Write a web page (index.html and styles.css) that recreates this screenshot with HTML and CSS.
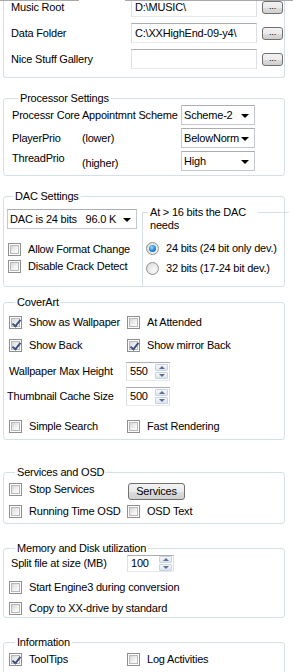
FILE: index.html
```html
<!DOCTYPE html>
<html lang="en">
<head>
  <meta charset="UTF-8" />
  <title>Settings</title>
  <link rel="stylesheet" href="styles.css">
</head>
<body>
  <div class="topline"><span class="seg seg-a"></span><span class="seg seg-b"></span></div>

  <div class="box folders">
    <div class="frow first">
      <span class="flabel">Music Root</span>
      <span class="input">D:\MUSIC\</span>
      <span class="btn dots">...</span>
    </div>
    <div class="frow">
      <span class="flabel">Data Folder</span>
      <span class="input">C:\XXHighEnd-09-y4\</span>
      <span class="btn dots">...</span>
    </div>
    <div class="frow">
      <span class="flabel">Nice Stuff Gallery</span>
      <span class="input"></span>
      <span class="btn dots">...</span>
    </div>
  </div>

  <div class="box group proc">
    <div class="legend">Processor Settings</div>
    <div class="prow">
      <span class="plabel">Processr Core Appointmnt Scheme</span>
      <span class="select">Scheme-2<i class="arrow"></i></span>
    </div>
    <div class="prow">
      <span class="pname">PlayerPrio</span>
      <span class="pnote">(lower)</span>
      <span class="select">BelowNorm<i class="arrow"></i></span>
    </div>
    <div class="prow top">
      <span class="pname up">ThreadPrio</span>
      <span class="pnote down">(higher)</span>
      <span class="select">High<i class="arrow"></i></span>
    </div>
  </div>

  <div class="box group dac">
    <div class="legend">DAC Settings</div>
    <div class="dac-body">
      <div class="dac-left">
        <span class="select wide">DAC is 24 bits&nbsp;&nbsp;&nbsp;96.0 K<i class="arrow"></i></span>
        <label class="check first-check"><span class="cb"></span>Allow Format Change</label>
        <label class="check"><span class="cb"></span>Disable Crack Detect</label>
      </div>
      <div class="subbox">
        <div class="sublegend">At &gt; 16 bits the DAC needs</div>
        <label class="radio"><span class="rb on"></span>24 bits (24 bit only dev.)</label>
        <label class="radio"><span class="rb"></span>32 bits (17-24 bit dev.)</label>
      </div>
    </div>
  </div>

  <div class="box group cover">
    <div class="legend">CoverArt</div>
    <div class="crow r1">
      <label class="check col"><span class="cb on"></span>Show as Wallpaper</label>
      <label class="check"><span class="cb"></span>At Attended</label>
    </div>
    <div class="crow r2">
      <label class="check col"><span class="cb on"></span>Show Back</label>
      <label class="check"><span class="cb on"></span>Show mirror Back</label>
    </div>
    <div class="srow r3">
      <span class="slabel">Wallpaper Max Height</span>
      <span class="spin">550<span class="spin-btns"><i class="sb"><b class="tri-up"></b></i><i class="sb"><b class="tri-down"></b></i></span></span>
    </div>
    <div class="srow r4">
      <span class="slabel tight">Thumbnail Cache Size</span>
      <span class="spin">500<span class="spin-btns"><i class="sb"><b class="tri-up"></b></i><i class="sb"><b class="tri-down"></b></i></span></span>
    </div>
    <div class="crow r5">
      <label class="check col"><span class="cb"></span>Simple Search</label>
      <label class="check"><span class="cb"></span>Fast Rendering</label>
    </div>
  </div>

  <div class="box group services">
    <div class="legend">Services and OSD</div>
    <div class="crow s1">
      <label class="check col"><span class="cb"></span>Stop Services</label>
      <span class="btn svc">Services</span>
    </div>
    <div class="crow s2">
      <label class="check col"><span class="cb"></span>Running Time OSD</label>
      <label class="check"><span class="cb"></span>OSD Text</label>
    </div>
  </div>

  <div class="box group memory">
    <div class="legend">Memory and Disk utilization</div>
    <div class="srow m1">
      <span class="slabel">Split file at size (MB)</span>
      <span class="spin small">100<span class="spin-btns"><i class="sb"><b class="tri-up"></b></i><i class="sb"><b class="tri-down"></b></i></span></span>
    </div>
    <div class="crow m2">
      <label class="check"><span class="cb"></span>Start Engine3 during conversion</label>
    </div>
    <div class="crow m3">
      <label class="check"><span class="cb"></span>Copy to XX-drive by standard</label>
    </div>
  </div>

  <div class="box group info">
    <div class="legend">Information</div>
    <div class="crow i1">
      <label class="check col"><span class="cb on"></span>ToolTips</label>
      <label class="check"><span class="cb"></span>Log Activities</label>
    </div>
  </div>
</body>
</html>
```

FILE: styles.css
```css
body {
  margin: 0;
  background: #fff;
  color: #000;
  font-family: 'Liberation Sans', Arial, sans-serif;
  font-size: 11px;
  line-height: 13px;
  letter-spacing: -0.2px;
  overflow: hidden;
}
.topline {
  position: relative;
  z-index: 1;
  display: flex;
  height: 1px;
}
.seg {
  height: 1px;
  background: #a8a8a8;
}
.seg-a {
  width: 79px;
}
.seg-b {
  width: 168px;
  margin-left: 46px;
}
.box {
  box-sizing: border-box;
  width: 282px;
  margin-left: 3px;
  border: 1px solid #d5dfe5;
  border-radius: 3px;
}
.folders {
  margin-top: -6px;
  border-top: none;
  border-radius: 0 0 3px 3px;
  padding: 0 0 8px 7px;
}
.frow {
  display: flex;
  align-items: center;
  height: 20px;
  margin-top: 6px;
}
.frow.first {
  margin-top: 2px;
}
.flabel {
  width: 120px;
}
.input {
  box-sizing: border-box;
  width: 126px;
  height: 20px;
  padding: 3px 0 0 3px;
  border: 1px solid #dbdfe6;
  border-top-color: #abadb3;
  border-bottom-color: #e3e9ef;
  background: #fff;
  white-space: nowrap;
}
.btn {
  box-sizing: border-box;
  border: 1px solid #707070;
  border-radius: 3px;
  background: linear-gradient(#f2f2f2, #ebebeb 50%, #dddddd 51%, #cfcfcf);
  text-align: center;
}
.dots {
  width: 21px;
  height: 13px;
  margin-left: 5px;
  font-size: 9px;
  line-height: 9px;
}

/* group boxes */
.legend {
  width: fit-content;
  margin: -7px 0 0 6px;
  padding: 0 2px;
  background: #fff;
}
.proc {
  margin-top: 20px;
  padding: 0 0 4px 8px;
}
.prow {
  display: flex;
  align-items: center;
  height: 20px;
  margin-bottom: 3px;
}
.prow:last-child {
  margin-bottom: 0;
}
.prow.top {
  align-items: flex-start;
}
.plabel {
  width: 169px;
  white-space: nowrap;
}
.pname {
  width: 70px;
}
.pnote {
  width: 99px;
}
.up {
  margin-top: 1px;
}
.down {
  margin-top: 6px;
}
.select {
  box-sizing: border-box;
  position: relative;
  display: block;
  width: 74px;
  height: 20px;
  padding: 3px 0 0 2px;
  border: 1px solid #c3c8d0;
  border-top-color: #abadb3;
  background: #fff;
  white-space: nowrap;
}
.arrow {
  position: absolute;
  right: 5px;
  top: 8px;
  border-left: 4px solid transparent;
  border-right: 4px solid transparent;
  border-top: 4px solid #000;
}

/* DAC */
.dac {
  margin-top: 20px;
  padding-left: 3px;
}
.dac-body {
  display: flex;
}
.dac-left {
  flex-shrink: 0;
  width: 130px;
  margin-right: 5px;
}
.select.wide {
  width: 130px;
  margin-top: 6px;
}
.check {
  display: flex;
  align-items: center;
  height: 17px;
  white-space: nowrap;
}
.first-check {
  margin-top: 12px;
}
.dac .check {
  padding-left: 1px;
}
.cb {
  box-sizing: border-box;
  position: relative;
  flex-shrink: 0;
  width: 13px;
  height: 13px;
  margin-right: 7px;
  border: 1px solid #8e8f8f;
  background: #fff;
}
.cb::before {
  content: "";
  position: absolute;
  left: 1px;
  top: 1px;
  right: 1px;
  bottom: 1px;
  border: 1px solid #b9b9b9;
  background: linear-gradient(135deg, #d6d6d6, #f2f2f2 60%, #fdfdfd);
}
.cb.on::after {
  content: "";
  position: absolute;
  left: 4px;
  top: 1px;
  width: 3px;
  height: 7px;
  border-right: 2px solid #3e5380;
  border-bottom: 2px solid #3e5380;
  transform: rotate(38deg);
}
.subbox {
  flex-shrink: 0;
  box-sizing: border-box;
  width: 147px;
  margin-top: 9px;
  padding-bottom: 8px;
  border-top: 1px solid #d5dfe5;
  border-left: 1px solid #d5dfe5;
}
.sublegend {
  width: 106px;
  margin: -7px 0 0 5px;
  padding: 0 2px;
  background: #fff;
}
.radio {
  display: flex;
  align-items: center;
  height: 20px;
  padding-left: 3px;
  white-space: nowrap;
}
.radio:first-of-type {
  margin-top: 6px;
}
.rb {
  box-sizing: border-box;
  position: relative;
  width: 13px;
  height: 13px;
  margin-right: 7px;
  border: 1px solid #8e8f8f;
  border-radius: 50%;
  background: radial-gradient(circle at 65% 65%, #fafafa, #d8d8d8);
}
.rb.on::after {
  content: "";
  position: absolute;
  left: 2px;
  top: 2px;
  width: 7px;
  height: 7px;
  border-radius: 50%;
  background: radial-gradient(circle at 40% 35%, #9fdcff, #1b82d8 55%, #0b4f9e);
}

/* CoverArt */
.cover {
  margin-top: 15px;
  padding: 0 0 3px 5px;
}
.crow {
  display: flex;
  align-items: center;
  height: 20px;
}
.col {
  width: 118px;
}
.r1,
.r2 {
  margin-top: 3px;
}
.r5 {
  margin-top: 10px;
}
.srow {
  display: flex;
  align-items: center;
  height: 19px;
}
.r3 {
  margin-top: 7px;
}
.r4 {
  margin-top: 6px;
}
.slabel {
  width: 117px;
  white-space: nowrap;
}
.slabel.tight {
  margin-left: -2px;
  width: 119px;
}
.spin {
  box-sizing: border-box;
  display: flex;
  justify-content: space-between;
  align-items: center;
  width: 44px;
  height: 19px;
  padding: 0 1px 0 3px;
  border: 1px solid #abadb3;
  border-color: #abadb3 #dbdfe6 #e3e9ef;
}
.spin-btns {
  display: flex;
  flex-direction: column;
  gap: 1px;
}
.sb {
  box-sizing: border-box;
  display: flex;
  justify-content: center;
  align-items: center;
  width: 13px;
  height: 7px;
  border: 1px solid #c9d2de;
  border-radius: 1px;
  background: linear-gradient(#f6f8fb, #dde5ee);
}
.tri-up {
  border-left: 3px solid transparent;
  border-right: 3px solid transparent;
  border-bottom: 3px solid #5a6f94;
}
.tri-down {
  border-left: 3px solid transparent;
  border-right: 3px solid transparent;
  border-top: 3px solid #5a6f94;
}

/* Services */
.services {
  margin-top: 32px;
  padding: 0 0 3px 5px;
}
.s1 {
  height: 18px;
  margin-top: 1px;
}
.svc {
  width: 57px;
  height: 17px;
  margin: 4px 0 0 1px;
  line-height: 15px;
}
.s2 {
  height: 18px;
  margin-top: 4px;
}

/* Memory */
.memory {
  margin-top: 24px;
  padding: 0 0 1px 5px;
}
.memory .slabel {
  width: 116px;
  padding-left: 2px;
}
.m1 {
  height: 17px;
}
.spin.small {
  width: 47px;
  height: 17px;
}
.m2 {
  height: 18px;
  margin-top: 6px;
}
.m3 {
  height: 16px;
  margin-top: 4px;
}

/* Information */
.info {
  margin-top: 24px;
  padding: 0 0 20px 5px;
}
.i1 {
  height: 18px;
  margin-top: 1px;
}
```
